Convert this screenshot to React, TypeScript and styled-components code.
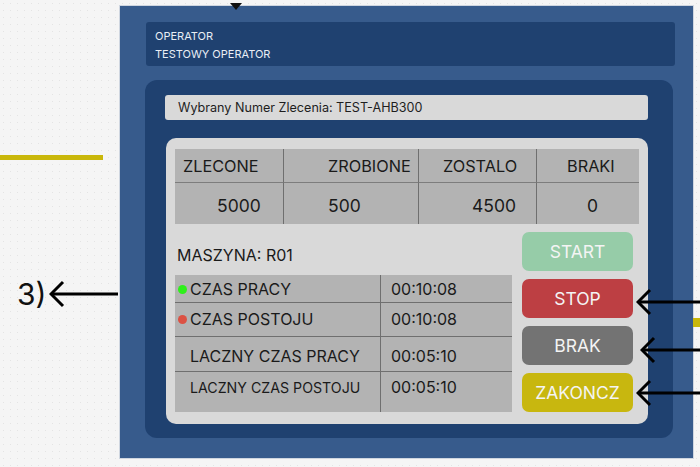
import React from "react";
import styled, { createGlobalStyle } from "styled-components";

const GlobalStyle = createGlobalStyle`
  html, body {
    margin: 0;
    padding: 0;
  }
  body {
    background-color: #f5f5f5;
    background-image: radial-gradient(circle, #e4e4e4 0.7px, transparent 1px);
    background-size: 7px 7px;
    font-family: Inter, "Noto Sans", "Liberation Sans", sans-serif;
  }
`;

const Canvas = styled.div`
  position: relative;
  width: 700px;
  height: 467px;
  overflow: hidden;
  box-sizing: border-box;
  padding: 6px 7px 9px 120px;
`;

const Screen = styled.div`
  box-sizing: border-box;
  width: 573px;
  height: 452px;
  background: #375b8c;
  box-shadow: 0 0 0 1px #cfd6e0;
  padding: 16px 20px 20px 25px;
  display: flex;
  flex-direction: column;
  gap: 14px;
`;

const OperatorBar = styled.div`
  height: 44px;
  margin-left: 1px;
  margin-right: -2px;
  box-sizing: border-box;
  background: #1f4170;
  border-radius: 3px;
  padding: 8px 9px;
  display: flex;
  flex-direction: column;
  gap: 5px;
  color: #e9eef5;
  font-size: 11px;
  line-height: 13px;
`;

const Workspace = styled.div`
  flex: 1;
  background: #1f4170;
  border-radius: 12px;
  padding: 15px 25px 14px 20px;
  display: flex;
  flex-direction: column;
  gap: 18px;
`;

const OrderField = styled.div`
  height: 25px;
  box-sizing: border-box;
  background: #d9d9d9;
  border-radius: 3px;
  padding: 0 13px;
  display: flex;
  align-items: center;
  font-size: 12.6px;
  color: #1e1e1e;
`;

const Card = styled.div`
  flex: 1;
  margin-left: 1px;
  background: #d9d9d9;
  border-radius: 10px;
  padding: 11px 9px 12px 9px;
  display: flex;
  flex-direction: column;
  gap: 8px;
`;

const StatsGrid = styled.div`
  display: grid;
  grid-template-columns: 109px 135px 118px 102px;
  grid-template-rows: 34px 41px;
  background: #b3b3b3;
  color: #1a1a1a;
`;

const StatCell = styled.div<{ $inset: number; $head?: boolean; $last?: boolean }>`
  display: flex;
  align-items: center;
  padding-left: ${(p) => p.$inset}px;
  padding-top: ${(p) => (p.$head ? "1px" : "4px")};
  border-right: ${(p) => (p.$last ? "none" : "1px solid #6f6f6f")};
  border-bottom: ${(p) => (p.$head ? "1px solid #7d7d7d" : "none")};
  font-size: ${(p) => (p.$head ? "16.3px" : "17.5px")};
  white-space: nowrap;
  box-sizing: border-box;
`;

const Lower = styled.div`
  flex: 1;
  display: grid;
  grid-template-columns: 337px 111px;
  column-gap: 10px;
`;

const MachineColumn = styled.div`
  display: flex;
  flex-direction: column;
`;

const MachineLabel = styled.div`
  height: 43px;
  display: flex;
  align-items: center;
  padding-left: 2px;
  padding-top: 3px;
  box-sizing: border-box;
  font-size: 16px;
  color: #1a1a1a;
`;

const TimesTable = styled.div`
  flex: 1;
  background: #b3b3b3;
  display: flex;
  flex-direction: column;
`;

const TimeRow = styled.div<{ $height: number; $divider?: boolean }>`
  height: ${(p) => p.$height}px;
  box-sizing: border-box;
  display: grid;
  grid-template-columns: 206px 1fr;
  border-bottom: ${(p) => (p.$divider ? "1px solid #6f6f6f" : "none")};
  color: #1a1a1a;
`;

const TimeName = styled.div<{ $size: number; $shift: number }>`
  display: flex;
  align-items: center;
  gap: 3px;
  padding-left: 3px;
  padding-top: ${(p) => Math.max(p.$shift, 0)}px;
  padding-bottom: ${(p) => Math.max(-p.$shift, 0)}px;
  border-right: 1px solid #6f6f6f;
  font-size: ${(p) => p.$size}px;
  white-space: nowrap;
`;

const StatusDot = styled.span<{ $color?: string }>`
  width: 9px;
  height: 9px;
  border-radius: 50%;
  flex: none;
  background: ${(p) => p.$color ?? "transparent"};
`;

const TimeValue = styled.div<{ $shift: number }>`
  display: flex;
  align-items: center;
  padding-left: 10px;
  padding-top: ${(p) => Math.max(p.$shift, 0)}px;
  padding-bottom: ${(p) => Math.max(-p.$shift, 0)}px;
  font-size: 16px;
`;

const ButtonStack = styled.div`
  display: flex;
  flex-direction: column;
  justify-content: space-between;
`;

const ActionButton = styled.button<{ $bg: string; $fg?: string }>`
  height: 39px;
  border: none;
  border-radius: 7px;
  background: ${(p) => p.$bg};
  color: ${(p) => p.$fg ?? "#f4f4f4"};
  font-family: inherit;
  font-size: 17.5px;
  padding: 0;
  cursor: pointer;
`;

/* Annotation layer drawn on top of the design canvas */
const Note = styled.div<{ $x: number; $y: number }>`
  position: absolute;
  left: ${(p) => p.$x}px;
  top: ${(p) => p.$y}px;
`;

const NoteLabel = styled.span`
  font-family: Inter, "Noto Sans", sans-serif;
  font-size: 30px;
  line-height: 30px;
  color: #111;
`;

const Marker = styled.div<{ $x: number; $y: number; $w: number; $h: number }>`
  position: absolute;
  left: ${(p) => p.$x}px;
  top: ${(p) => p.$y}px;
  width: ${(p) => p.$w}px;
  height: ${(p) => p.$h}px;
  background: #c9b70a;
`;

const LeftArrow = ({ length }: { length: number }) => (
  <svg width={length} height="28" viewBox={`0 0 ${length} 28`} fill="none">
    <path d={`M2 14 H${length}`} stroke="#000" strokeWidth="3" />
    <path d="M14 2 L2 14 L14 26" stroke="#000" strokeWidth="3" strokeLinejoin="miter" />
  </svg>
);

const stats = [
  { head: "ZLECONE", value: "5000", headInset: 8, valueInset: 42 },
  { head: "ZROBIONE", value: "500", headInset: 44, valueInset: 44 },
  { head: "ZOSTALO", value: "4500", headInset: 24, valueInset: 53 },
  { head: "BRAKI", value: "0", headInset: 30, valueInset: 50 },
];

const times = [
  { name: "CZAS PRACY", value: "00:10:08", dot: "#2ef01a", height: 28, shift: 1, size: 16 },
  { name: "CZAS POSTOJU", value: "00:10:08", dot: "#dc5143", height: 34, shift: -1, size: 16 },
  { name: "LACZNY CZAS PRACY", value: "00:05:10", height: 35, shift: 4, size: 16 },
  { name: "LACZNY CZAS POSTOJU", value: "00:05:10", height: 40, shift: -10, size: 14.2 },
];

export default function App() {
  return (
    <>
      <GlobalStyle />
      <Canvas>
        <Screen>
          <OperatorBar>
            <span>OPERATOR</span>
            <span>TESTOWY OPERATOR</span>
          </OperatorBar>
          <Workspace>
            <OrderField>Wybrany Numer Zlecenia: TEST-AHB300</OrderField>
            <Card>
              <StatsGrid>
                {stats.map((s, i) => (
                  <StatCell key={s.head} $inset={s.headInset} $head $last={i === 3}>
                    {s.head}
                  </StatCell>
                ))}
                {stats.map((s, i) => (
                  <StatCell key={s.head + "v"} $inset={s.valueInset} $last={i === 3}>
                    {s.value}
                  </StatCell>
                ))}
              </StatsGrid>
              <Lower>
                <MachineColumn>
                  <MachineLabel>MASZYNA: R01</MachineLabel>
                  <TimesTable>
                    {times.map((t, i) => (
                      <TimeRow key={t.name} $height={t.height} $divider={i < 3}>
                        <TimeName $size={t.size} $shift={t.shift}>
                          <StatusDot $color={t.dot} />
                          {t.name}
                        </TimeName>
                        <TimeValue $shift={t.shift}>{t.value}</TimeValue>
                      </TimeRow>
                    ))}
                  </TimesTable>
                </MachineColumn>
                <ButtonStack>
                  <ActionButton $bg="#96cca8">START</ActionButton>
                  <ActionButton $bg="#bd3f43">STOP</ActionButton>
                  <ActionButton $bg="#737373">BRAK</ActionButton>
                  <ActionButton $bg="#c8b70f">ZAKONCZ</ActionButton>
                </ButtonStack>
              </Lower>
            </Card>
          </Workspace>
        </Screen>

        <Note $x={229} $y={-4}>
          <svg width="14" height="10" viewBox="0 0 14 10">
            <path d="M1 1 L7 8 L13 1 Z" fill="#111" />
          </svg>
        </Note>
        <Marker $x={0} $y={155} $w={103} $h={5} />
        <Marker $x={693} $y={318} $w={10} $h={9} />
        <Note $x={17} $y={279}>
          <NoteLabel>3)</NoteLabel>
        </Note>
        <Note $x={49} $y={280}>
          <LeftArrow length={69} />
        </Note>
        <Note $x={636} $y={288}>
          <LeftArrow length={70} />
        </Note>
        <Note $x={640} $y={336}>
          <LeftArrow length={70} />
        </Note>
        <Note $x={636} $y={379}>
          <LeftArrow length={70} />
        </Note>
      </Canvas>
    </>
  );
}
